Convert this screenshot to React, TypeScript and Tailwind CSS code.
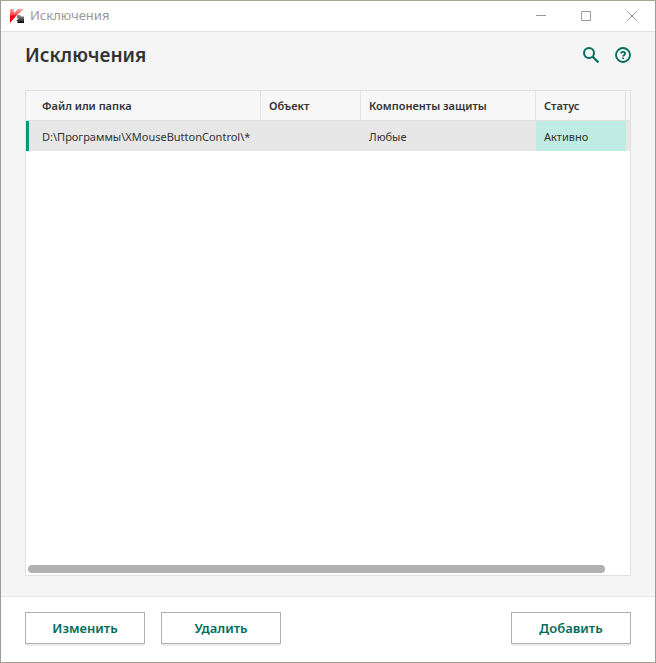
import { clsx } from 'clsx'

interface Exclusion {
  path: string
  object: string
  components: string
  active: boolean
}

const exclusions: Exclusion[] = [
  { path: 'D:\\Программы\\XMouseButtonControl\\*', object: '', components: 'Любые', active: true },
]

function Logo() {
  return (
    <svg width="16" height="16" viewBox="0 0 16 16" aria-hidden="true">
      <defs>
        <linearGradient id="red" x1="0" y1="0" x2="0" y2="1">
          <stop offset="0" stopColor="#f6a8a8" />
          <stop offset="0.4" stopColor="#fb4a4a" />
          <stop offset="0.5" stopColor="#ff0000" />
          <stop offset="1" stopColor="#f00000" />
        </linearGradient>
        <linearGradient id="black" x1="0" y1="0" x2="0" y2="1">
          <stop offset="0" stopColor="#999" />
          <stop offset="0.6" stopColor="#444" />
          <stop offset="1" stopColor="#000" />
        </linearGradient>
      </defs>
      <path d="M1 1h4v4L9 1h6L7.500 7.500 1 15z" fill="url(#red)" />
      <path d="M8 7h3l1.500 1.500H15V15H8.500v-2H7l3-2.500H8z" fill="url(#black)" />
    </svg>
  )
}

function WindowControls() {
  return (
    <div className="flex text-[#999]">
      <button type="button" aria-label="Свернуть" className="flex h-[30px] w-[45px] items-center justify-center">
        <svg width="10" height="10" viewBox="0 0 10 10" stroke="currentColor" shapeRendering="crispEdges">
          <path d="M0 4.5h10" />
        </svg>
      </button>
      <button type="button" aria-label="Развернуть" className="flex h-[30px] w-[46px] items-center justify-center">
        <svg width="10" height="10" viewBox="0 0 10 10" fill="none" stroke="currentColor">
          <path d="M.5.5h9v9h-9z" />
        </svg>
      </button>
      <button type="button" aria-label="Закрыть" className="flex h-[30px] w-[46px] items-center justify-center">
        <svg width="10" height="10" viewBox="0 0 10 10" stroke="currentColor">
          <path d="M0 0l10 10M10 0L0 10" />
        </svg>
      </button>
    </div>
  )
}

function ActionButton({ children, className }: { children: string; className?: string }) {
  return (
    <button
      type="button"
      className={clsx(
        'h-8 w-[120px] border border-[#b1b1b1] bg-white pt-0.5 text-[13px] font-semibold text-[#006d5c] shadow-[0_3px_0_-1px_#ececec]',
        className
      )}
    >
      {children}
    </button>
  )
}

const headCell = 'border-r border-b border-[#e1e1e1] px-2 pt-0.5 text-left font-semibold'

export default function App() {
  return (
    <div className="flex min-h-screen flex-col border border-[#a09c92] border-t-[#a8a590] bg-[#f5f5f5] font-['Noto_Sans',sans-serif] text-[#333]">
      <header className="flex h-[31px] items-center border-b border-[#e1e1e1] bg-white pl-2">
        <Logo />
        <span className="ml-[5px] flex-1 text-[13px] text-[#999]">Исключения</span>
        <WindowControls />
      </header>

      <main className="flex flex-1 flex-col px-6 pb-5">
        <div className="flex h-[58px] items-center pb-3">
          <h1 className="flex-1 text-[19px] font-semibold">Исключения</h1>
          <div className="flex items-center gap-4 text-[#006d5c]">
            <button type="button" aria-label="Поиск">
              <svg width="16" height="16" viewBox="0 0 16 16" fill="none" stroke="currentColor" strokeWidth="2">
                <circle cx="6" cy="6" r="5" />
                <path d="M9.5 9.5l6 6" strokeWidth="2.2" />
              </svg>
            </button>
            <button type="button" aria-label="Справка">
              <svg width="16" height="16" viewBox="0 0 16 16" fill="none" stroke="currentColor">
                <circle cx="8" cy="8" r="7" strokeWidth="1.8" />
                <path d="M6 6.6C6 4.4 10.2 4.4 10.2 6.6 10.2 8 8.1 7.9 8.1 9.5" strokeWidth="1.7" />
                <path d="M7.2 11.3h1.8" strokeWidth="1.6" />
              </svg>
            </button>
          </div>
        </div>

        <div className="flex flex-1 flex-col border border-[#e1e1e1] bg-white">
          <table className="w-full table-fixed border-separate border-spacing-0 text-[11px]">
            <thead className="bg-[#f7f7f7]">
              <tr className="h-[30px]">
                <th className={clsx(headCell, 'w-[235px] pl-4')}>Файл или папка</th>
                <th className={clsx(headCell, 'w-[100px]')}>Объект</th>
                <th className={clsx(headCell, 'w-[175px]')}>Компоненты защиты</th>
                <th className={clsx(headCell, 'w-[90px]')}>Статус</th>
                <td className="border-b border-[#e1e1e1]" />
              </tr>
            </thead>
            <tbody>
              {exclusions.map(item => (
                <tr key={item.path} className="h-[30px] bg-[#e7e7e7]">
                  <td className="border-l-3 border-[#009b77] pt-0.5 pl-[13px] whitespace-nowrap">{item.path}</td>
                  <td className="px-2 pt-0.5">{item.object}</td>
                  <td className="px-2 pt-0.5">{item.components}</td>
                  <td className={clsx('px-2 pt-0.5', item.active && 'bg-[#c0ebe4]')}>
                    {item.active ? 'Активно' : 'Неактивно'}
                  </td>
                  <td />
                </tr>
              ))}
            </tbody>
          </table>
          <div className="mt-auto mr-[25px] mb-0.5 ml-0.5 h-2 rounded-full bg-[#b1b1b1]" />
        </div>
      </main>

      <footer className="flex gap-4 border-t border-[#e8e8e8] bg-white px-6 pt-[15px] pb-[18px]">
        <ActionButton>Изменить</ActionButton>
        <ActionButton>Удалить</ActionButton>
        <ActionButton className="ml-auto">Добавить</ActionButton>
      </footer>
    </div>
  )
}
